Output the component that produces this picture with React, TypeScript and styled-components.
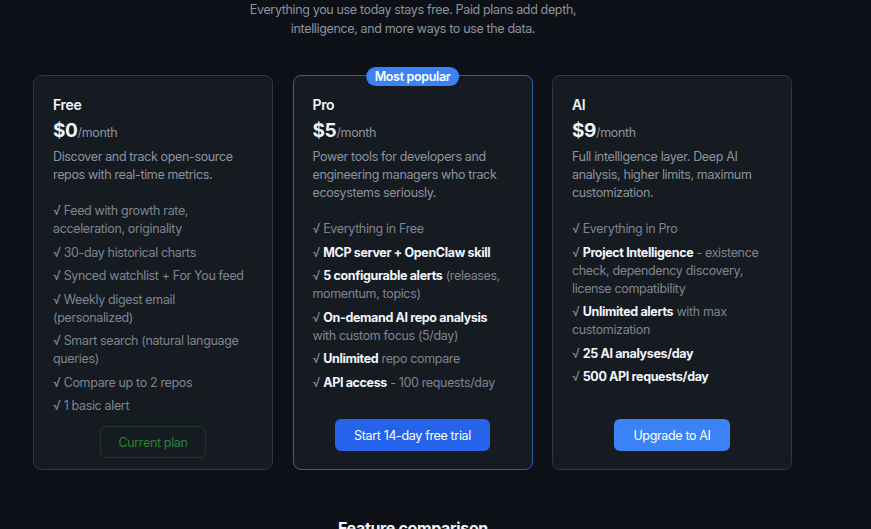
import React from "react";
import styled, { createGlobalStyle } from "styled-components";

interface Feature {
  strong?: string;
  text: string;
}

interface Plan {
  name: string;
  price: string;
  blurb: string;
  features: Feature[];
  cta: string;
  variant: "current" | "primary" | "accent";
  popular?: boolean;
}

const plans: Plan[] = [
  {
    name: "Free",
    price: "$0",
    blurb: "Discover and track open-source repos with real-time metrics.",
    features: [
      { text: "Feed with growth rate, acceleration, originality" },
      { text: "30-day historical charts" },
      { text: "Synced watchlist + For You feed" },
      { text: "Weekly digest email (personalized)" },
      { text: "Smart search (natural language queries)" },
      { text: "Compare up to 2 repos" },
      { text: "1 basic alert" },
    ],
    cta: "Current plan",
    variant: "current",
  },
  {
    name: "Pro",
    price: "$5",
    blurb:
      "Power tools for developers and engineering managers who track ecosystems seriously.",
    features: [
      { text: "Everything in Free" },
      { strong: "MCP server + OpenClaw skill", text: "" },
      { strong: "5 configurable alerts", text: " (releases, momentum, topics)" },
      { strong: "On-demand AI repo analysis", text: " with custom focus (5/day)" },
      { strong: "Unlimited", text: " repo compare" },
      { strong: "API access", text: " - 100 requests/day" },
    ],
    cta: "Start 14-day free trial",
    variant: "primary",
    popular: true,
  },
  {
    name: "AI",
    price: "$9",
    blurb:
      "Full intelligence layer. Deep AI analysis, higher limits, maximum customization.",
    features: [
      { text: "Everything in Pro" },
      {
        strong: "Project Intelligence",
        text: " - existence check, dependency discovery, license compatibility",
      },
      { strong: "Unlimited alerts", text: " with max customization" },
      { strong: "25 AI analyses/day", text: "" },
      { strong: "500 API requests/day", text: "" },
    ],
    cta: "Upgrade to AI",
    variant: "accent",
  },
];

function App() {
  return (
    <>
      <GlobalStyle />
      <Page>
        <Intro>
          Everything you use today stays free. Paid plans add depth,
          intelligence, and more ways to use the data.
        </Intro>
        <PlanGrid>
          {plans.map((plan) => (
            <Card key={plan.name} $highlight={!!plan.popular}>
              {plan.popular && <Badge>Most popular</Badge>}
              <PlanName>{plan.name}</PlanName>
              <Price>
                {plan.price}
                <Period>/month</Period>
              </Price>
              <Blurb>{plan.blurb}</Blurb>
              <FeatureList>
                {plan.features.map((f, i) => (
                  <FeatureItem key={i}>
                    √ {f.strong && <strong>{f.strong}</strong>}
                    {f.text}
                  </FeatureItem>
                ))}
              </FeatureList>
              <Footer>
                <PlanButton $variant={plan.variant}>{plan.cta}</PlanButton>
              </Footer>
            </Card>
          ))}
        </PlanGrid>
        <SectionTitle>Feature comparison</SectionTitle>
      </Page>
    </>
  );
}

export default App;

const GlobalStyle = createGlobalStyle`
  html, body {
    margin: 0;
    background: #0d1117;
  }
  body {
    font-family: Inter, "Noto Sans", sans-serif;
    color: #e6edf3;
    letter-spacing: -0.35px;
    -webkit-font-smoothing: antialiased;
  }
`;

const Page = styled.main`
  width: 760px;
  margin-left: 33px;
  display: flex;
  flex-direction: column;
  align-items: center;
`;

const Intro = styled.p`
  margin: 0;
  max-width: 350px;
  text-align: center;
  font-size: 12.5px;
  line-height: 19px;
  color: #8b949e;
`;

const PlanGrid = styled.div`
  width: 100%;
  margin-top: 37px;
  display: grid;
  grid-template-columns: repeat(3, 240px);
  column-gap: 19.5px;
`;

const Card = styled.section<{ $highlight: boolean }>`
  position: relative;
  display: flex;
  flex-direction: column;
  padding: 20px 19px 11px;
  background: #161b22;
  border: 1px solid ${(p) => (p.$highlight ? "#2f5fa8" : "#30363d")};
  border-radius: 8px;
`;

const Badge = styled.span`
  position: absolute;
  top: -9px;
  left: 50%;
  transform: translateX(-50%);
  padding: 1px 9px;
  border-radius: 999px;
  background: #3b82f6;
  color: #fff;
  font-size: 12.5px;
  font-weight: 600;
  line-height: 17px;
  white-space: nowrap;
`;

const PlanName = styled.h3`
  margin: 0;
  font-size: 14px;
  line-height: 18px;
  font-weight: 600;
  color: #f0f6fc;
`;

const Price = styled.div`
  margin-top: 6px;
  font-size: 19px;
  line-height: 22px;
  font-weight: 700;
  color: #f0f6fc;
`;

const Period = styled.span`
  font-size: 12.5px;
  font-weight: 400;
  color: #8b949e;
`;

const Blurb = styled.p`
  margin: 4px 0 0;
  font-size: 12.5px;
  line-height: 18px;
  color: #8b949e;
`;

const FeatureList = styled.ul`
  list-style: none;
  margin: 18px 0 0;
  padding: 0;
  display: flex;
  flex-direction: column;
  gap: 5.5px;
`;

const FeatureItem = styled.li`
  font-size: 12.5px;
  line-height: 18px;
  color: #7d8590;

  strong {
    font-weight: 700;
    color: #f0f6fc;
  }
`;

const Footer = styled.div`
  margin-top: auto;
  padding-top: 11px;
  display: flex;
  justify-content: center;
`;

const PlanButton = styled.button<{ $variant: "current" | "primary" | "accent" }>`
  height: 32px;
  padding: 0 ${(p) => (p.$variant === "current" ? "17px" : "18px")};
  border-radius: 6px;
  font-family: inherit;
  font-size: 12.5px;
  letter-spacing: inherit;
  white-space: nowrap;
  cursor: pointer;
  border: 1px solid
    ${(p) => (p.$variant === "current" ? "#1d3b24" : "transparent")};
  background: ${(p) =>
    p.$variant === "current"
      ? "transparent"
      : p.$variant === "primary"
        ? "#2563eb"
        : "#3b82f6"};
  color: ${(p) => (p.$variant === "current" ? "#238636" : "#ffffff")};
  margin-bottom: ${(p) => (p.$variant === "current" ? "0" : "7px")};
`;

const SectionTitle = styled.h2`
  margin: 48px 0 0;
  font-size: 16px;
  font-weight: 700;
  color: #f0f6fc;
`;
